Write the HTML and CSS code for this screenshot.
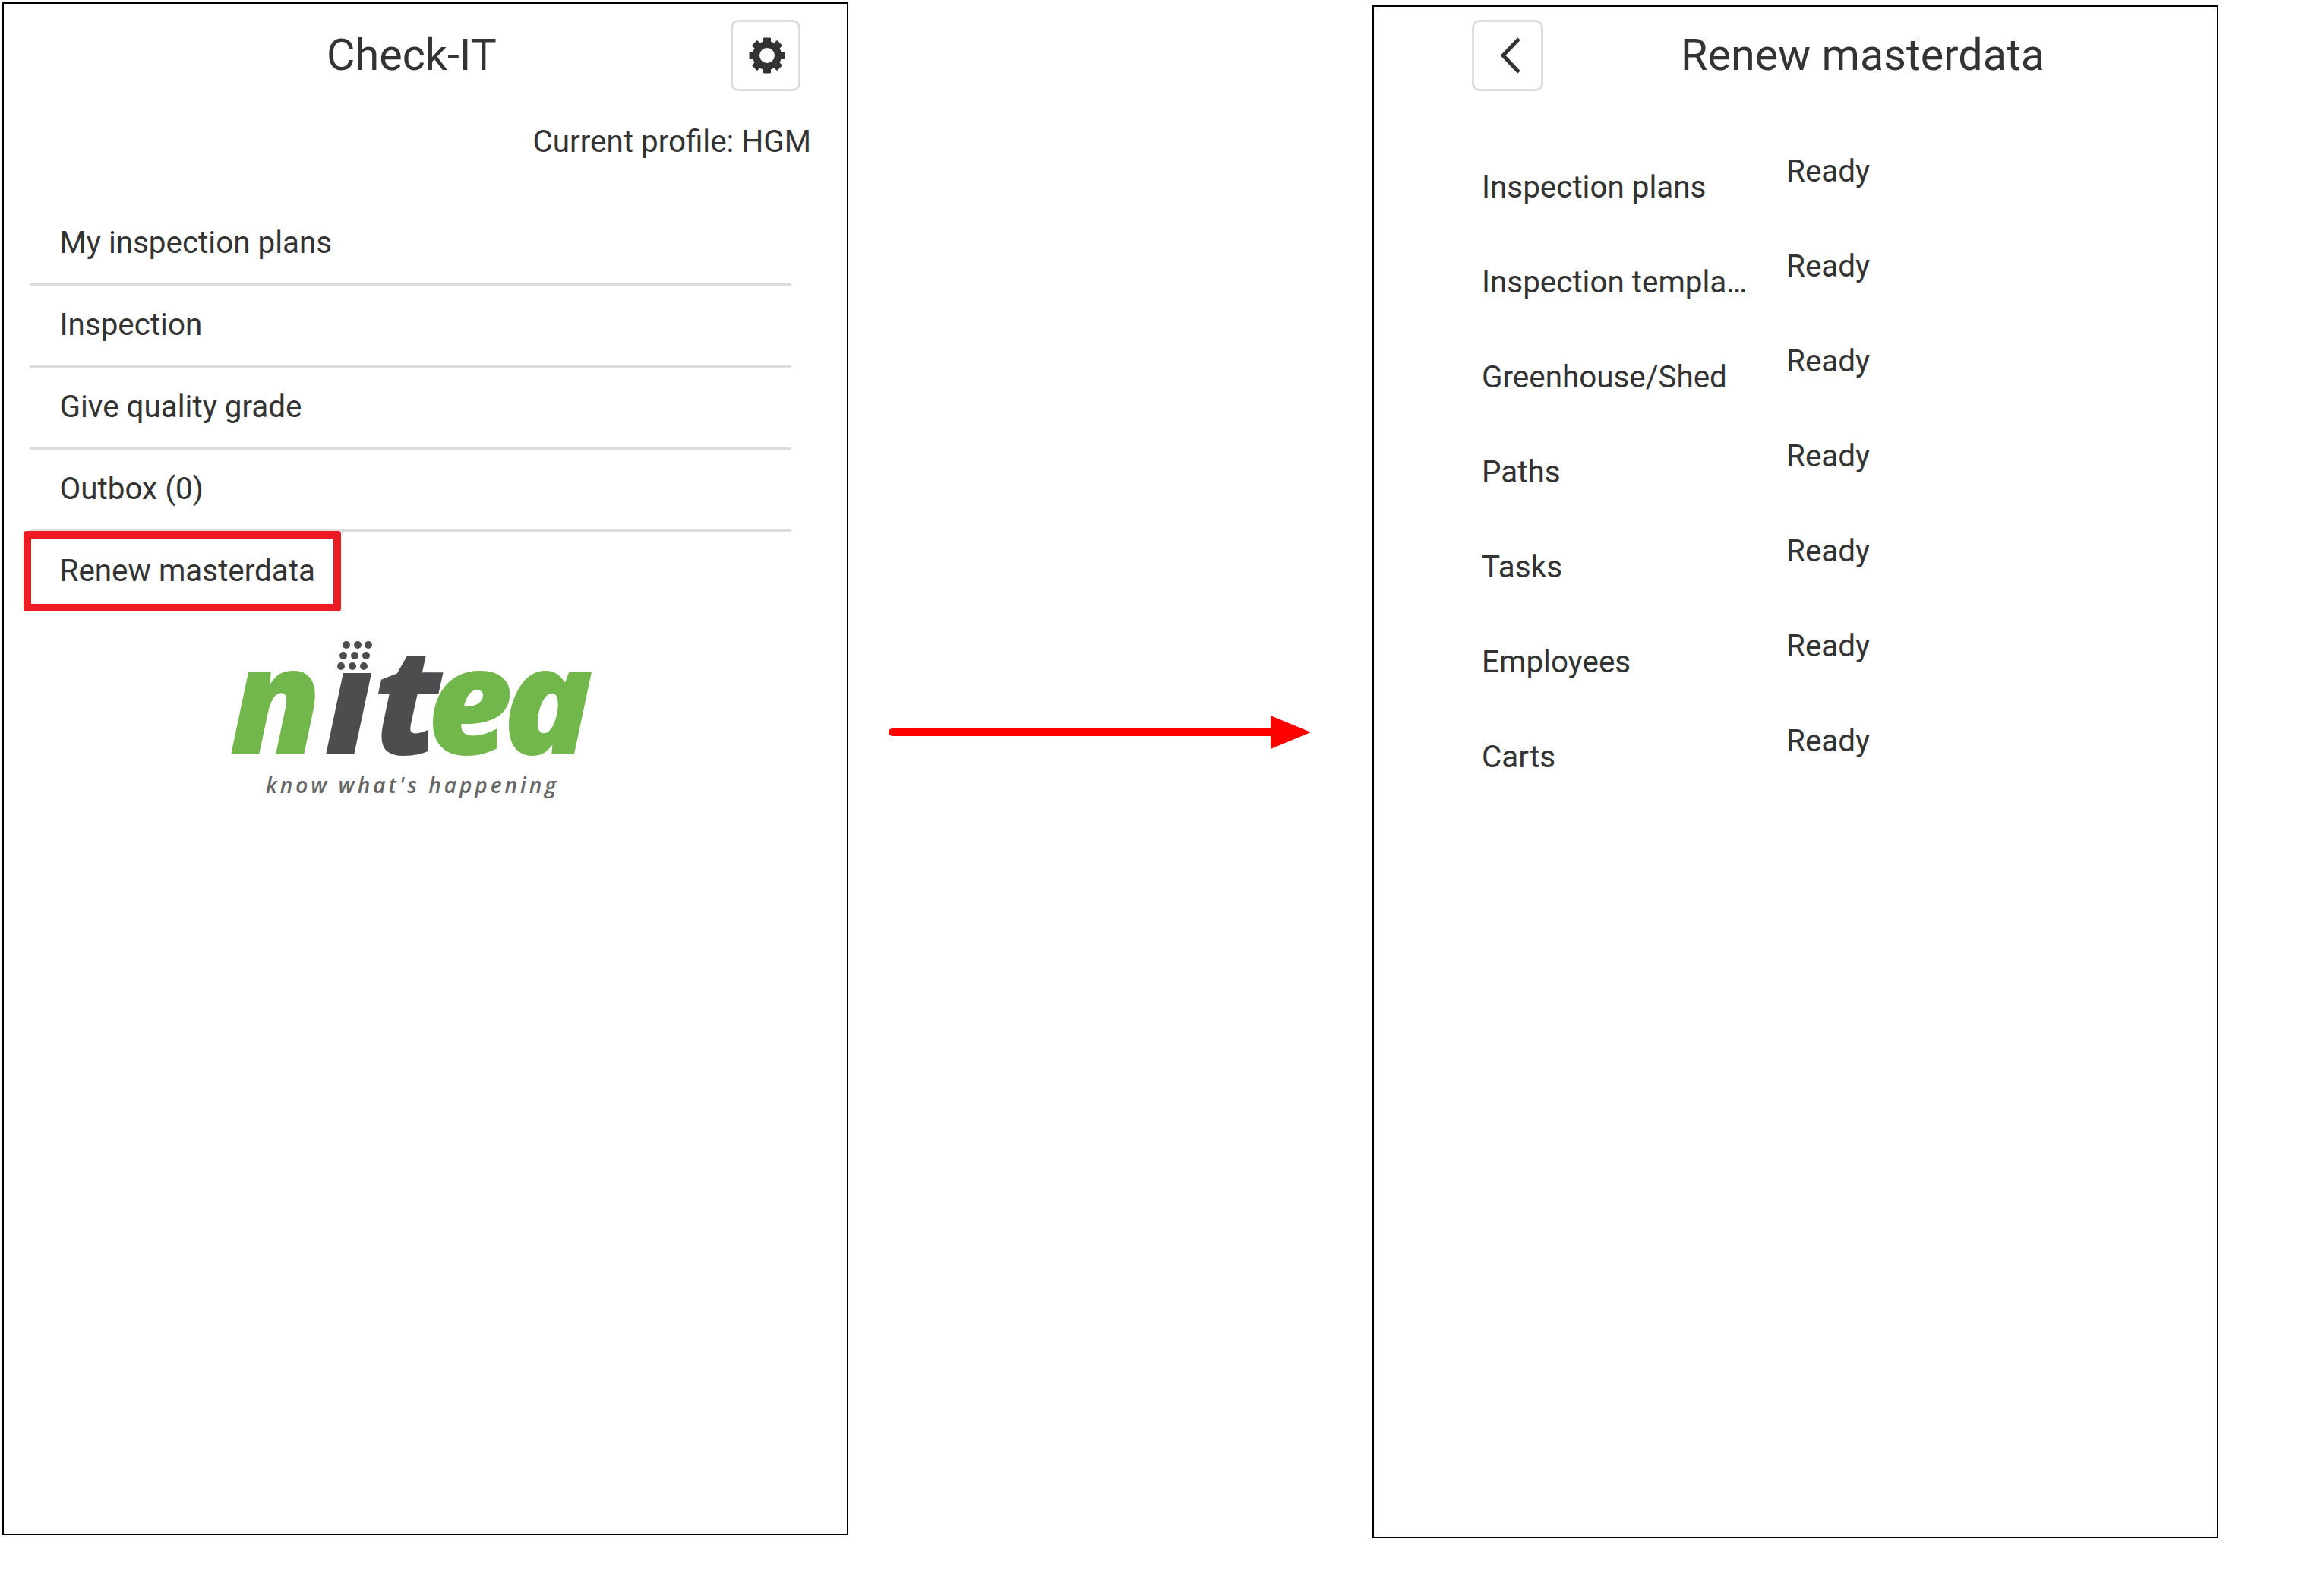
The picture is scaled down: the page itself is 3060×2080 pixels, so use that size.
FILE: index.html
```
<!DOCTYPE html>
<html lang="en">
<head>
<meta charset="utf-8">
<title>Check-IT</title>
<link rel="stylesheet" href="styles.css">
</head>
<body>
<main class="canvas">
  <section class="phone phone-home">
    <header class="head head-home">
      <h1 class="title">Check-IT</h1>
      <button class="icon-btn icon-btn-gear" type="button" aria-label="Settings">
        <svg class="gear" viewBox="0 0 48 48">
          <g class="gear-teeth">
            <rect x="19" y="0.5" width="10" height="47" rx="1"/>
            <rect x="19" y="0.5" width="10" height="47" rx="1" transform="rotate(45 24 24)"/>
            <rect x="19" y="0.5" width="10" height="47" rx="1" transform="rotate(90 24 24)"/>
            <rect x="19" y="0.5" width="10" height="47" rx="1" transform="rotate(135 24 24)"/>
          </g>
          <circle class="gear-ring" cx="24" cy="24" r="14.5"/>
        </svg>
      </button>
    </header>
    <p class="profile">Current profile: HGM</p>
    <ul class="menu">
      <li class="menu-item">My inspection plans</li>
      <li class="menu-item">Inspection</li>
      <li class="menu-item">Give quality grade</li>
      <li class="menu-item">Outbox (0)</li>
      <li class="menu-item menu-item-last">Renew masterdata<span class="highlight"></span></li>
    </ul>
    <svg class="logo" viewBox="0 0 530 240" role="img" aria-label="nitea logo">
      <text class="logo-word" y="161"><tspan class="logo-green" x="18">n</tspan><tspan class="logo-dark" x="143">i</tspan></text>
      <rect class="logo-mask" x="150" y="0" width="62" height="54"/>
      <g class="logo-dots">
        <circle cx="172" cy="17" r="5"/><circle cx="187" cy="17" r="5"/><circle cx="201" cy="17" r="5"/>
        <circle cx="168" cy="31" r="5"/><circle cx="183" cy="31" r="5"/><circle cx="198" cy="31" r="5"/>
        <circle cx="165" cy="45" r="5"/><circle cx="180" cy="45" r="5"/><circle cx="195" cy="45" r="5"/>
      </g>
      <text class="logo-word" y="161"><tspan class="logo-dark" x="208">t</tspan><tspan class="logo-green" x="278">e</tspan><tspan class="logo-green" x="378">a</tspan></text>
      <text class="logo-tag" x="66" y="212" textLength="382">know what's happening</text>
    </svg>
  </section>

  <svg class="arrow" viewBox="0 0 556 48" aria-hidden="true">
    <path class="arrow-line" d="M5 24H505"/>
    <path class="arrow-head" d="M503 2L556 24L503 46Z"/>
  </svg>

  <section class="phone phone-renew">
    <header class="head head-renew">
      <button class="icon-btn icon-btn-back" type="button" aria-label="Back">
        <svg class="chevron" viewBox="0 0 30 48"><path d="M26 2L5 24L26 46"/></svg>
      </button>
      <h1 class="title">Renew masterdata</h1>
    </header>
    <div class="status-list">
      <div class="status-row"><span class="status-name">Inspection plans</span><span class="status-value">Ready</span></div>
      <div class="status-row"><span class="status-name">Inspection templa…</span><span class="status-value">Ready</span></div>
      <div class="status-row"><span class="status-name">Greenhouse/Shed</span><span class="status-value">Ready</span></div>
      <div class="status-row"><span class="status-name">Paths</span><span class="status-value">Ready</span></div>
      <div class="status-row"><span class="status-name">Tasks</span><span class="status-value">Ready</span></div>
      <div class="status-row"><span class="status-name">Employees</span><span class="status-value">Ready</span></div>
      <div class="status-row"><span class="status-name">Carts</span><span class="status-value">Ready</span></div>
    </div>
  </section>
</main>
</body>
</html>
```

FILE: styles.css
```
* {
  box-sizing: border-box;
}

html,
body {
  margin: 0;
  background: #fff;
}

body {
  width: 3060px;
  height: 2080px;
  overflow: hidden;
  font-family: Roboto, "Liberation Sans", sans-serif;
  color: #333;
}

.canvas {
  display: flex;
  align-items: flex-start;
  padding: 3px 0 0 3px;
}

.phone {
  flex: none;
  width: 1114px;
  height: 2018px;
  border: 2px solid #000;
  background: #fff;
}

.phone-renew {
  margin: 4px 0 0 81px;
}

.head {
  display: flex;
  align-items: flex-start;
  padding-top: 21px;
}

.head-home {
  padding-left: 117px;
  padding-right: 61px;
}

.head-renew {
  padding-left: 129px;
  padding-right: 46px;
  padding-top: 17px;
}

.title {
  flex: 1;
  margin: 0;
  font-size: 57.5px;
  font-weight: 400;
  line-height: 66px;
  padding-top: 14px;
  text-align: center;
}

.icon-btn {
  flex: none;
  display: flex;
  align-items: center;
  justify-content: center;
  width: 94px;
  height: 94px;
  padding: 0;
  background: #fff;
  border: 3px solid #ddd;
  border-radius: 10px;
}

.icon-btn-gear {
  width: 92px;
  padding-left: 4px;
}

.icon-btn-back {
  padding-left: 8px;
}

.gear {
  width: 48px;
  height: 48px;
}

.gear-teeth {
  fill: #333;
}

.gear-ring {
  fill: #fff;
  stroke: #333;
  stroke-width: 9;
}

.chevron {
  width: 30px;
  height: 48px;
}

.chevron path {
  fill: none;
  stroke: #333;
  stroke-width: 5;
}

.profile {
  margin: 43px 0 0;
  padding-right: 47px;
  font-size: 40.4px;
  line-height: 48px;
  text-align: right;
}

.menu {
  width: 1003px;
  margin: 57px 0 0 34px;
  padding: 0;
  list-style: none;
}

.menu-item {
  position: relative;
  height: 108px;
  padding: 0 0 0 39.5px;
  font-size: 40.4px;
  line-height: 103px;
  border-bottom: 3px solid #ddd;
}

.menu-item-last {
  border-bottom: 0;
}

.highlight {
  position: absolute;
  left: -8px;
  top: -1px;
  width: 418px;
  height: 106px;
  border: 10px solid #ed1c24;
  border-radius: 4px;
}

.logo {
  display: block;
  width: 530px;
  height: 240px;
  margin: 24px 0 0 279px;
}

.logo-word {
  font-family: "Open Sans", "Noto Sans", sans-serif;
  font-size: 196px;
  font-weight: 800;
  font-style: italic;
}

.logo-green {
  fill: #72b74c;
}

.logo-dark {
  fill: #4d4d4f;
}

.logo-mask {
  fill: #fff;
}

.logo-dots {
  fill: #4d4d4f;
}

.logo-tag {
  font-family: "Open Sans", "Noto Sans", sans-serif;
  font-size: 28px;
  font-style: italic;
  font-weight: 600;
  fill: #666;
}

.arrow {
  flex: none;
  width: 556px;
  height: 48px;
  margin: 937px 0 0 53px;
}

.arrow-line {
  fill: none;
  stroke: #f00;
  stroke-width: 10;
  stroke-linecap: round;
}

.arrow-head {
  fill: #f00;
}

.status-list {
  margin-top: 82px;
}

.status-row {
  display: grid;
  grid-template-columns: 401px 1fr;
  height: 125px;
  padding-left: 142px;
  font-size: 40.4px;
  line-height: 48px;
}

.status-name {
  padding-top: 21px;
}
```
